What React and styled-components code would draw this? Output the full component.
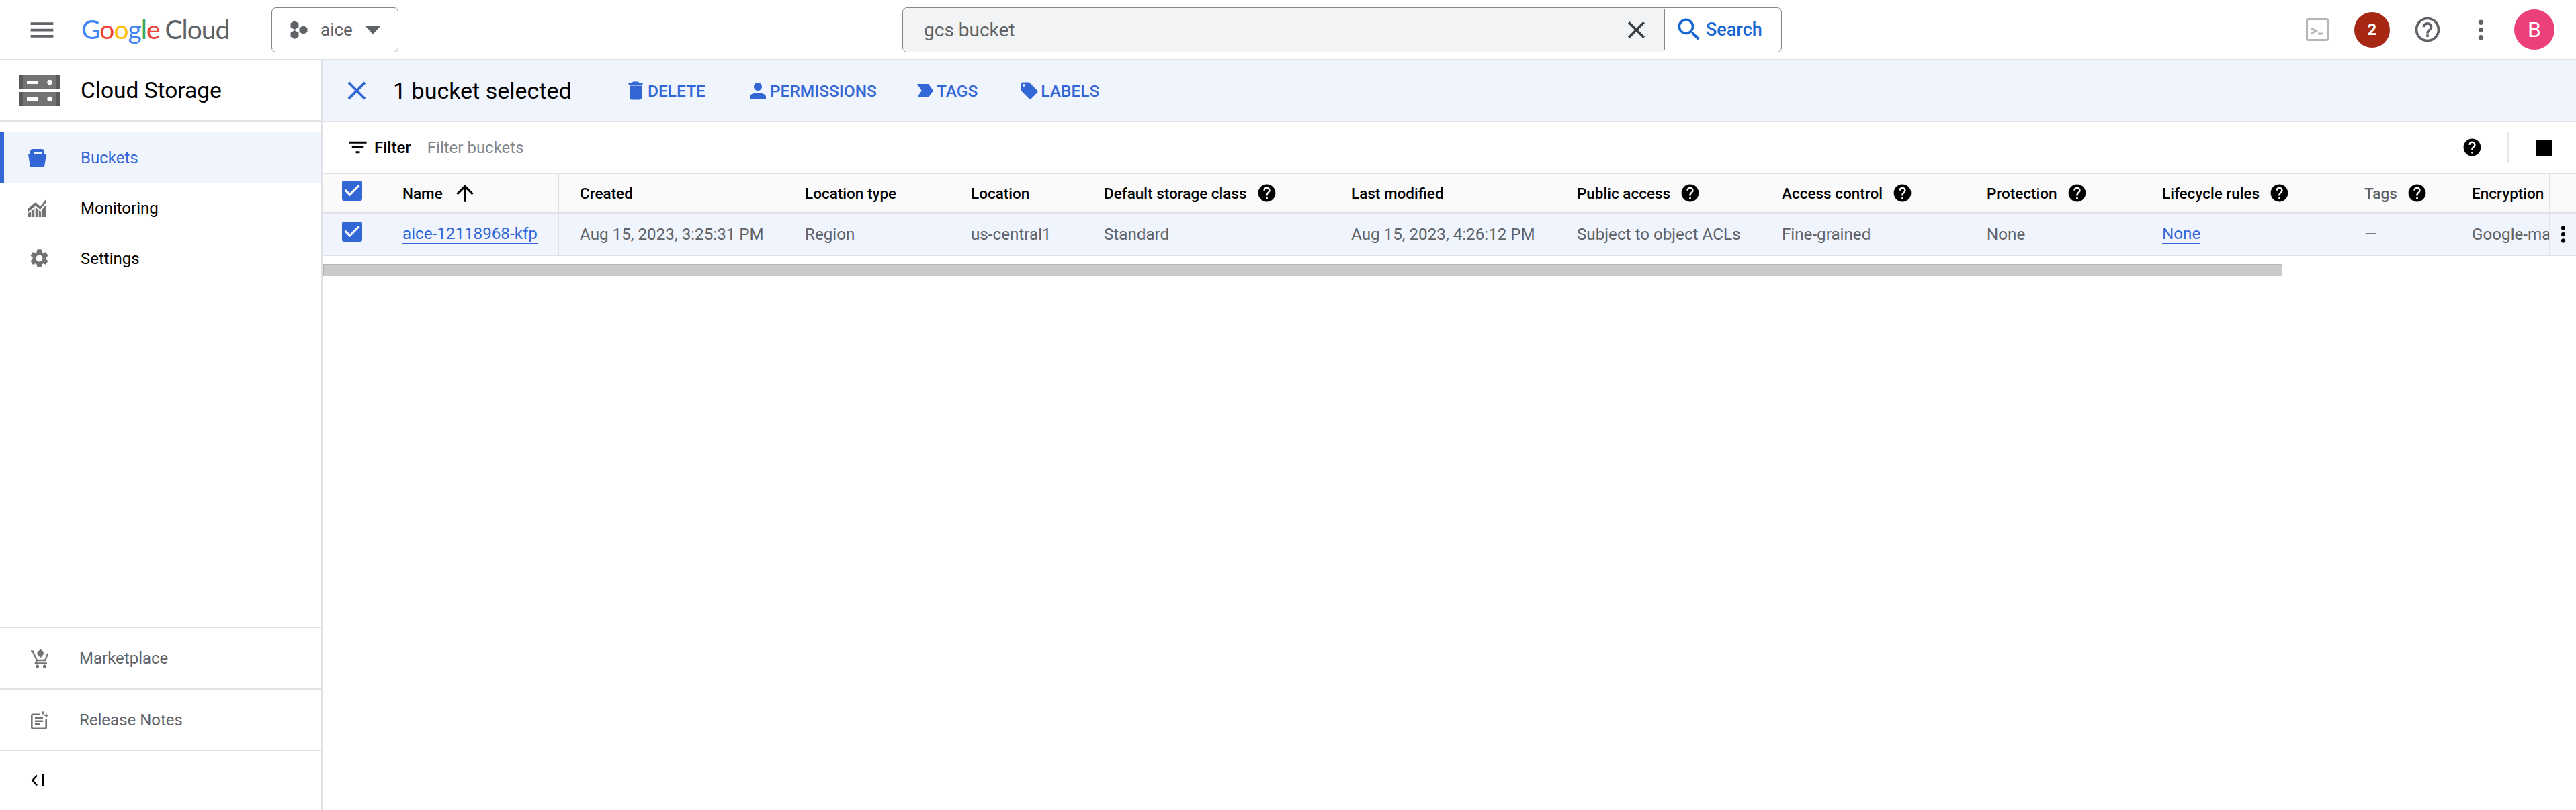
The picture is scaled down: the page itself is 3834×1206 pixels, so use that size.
import React from 'react'
import styled, { createGlobalStyle } from 'styled-components'
import {
  MdMenu,
  MdClose,
  MdDelete,
  MdPerson,
  MdLabelImportant,
  MdLocalOffer,
  MdFilterList,
  MdHelp,
  MdHelpOutline,
  MdMoreVert,
  MdArrowUpward,
  MdSearch,
  MdSettings,
  MdCheckBox,
} from 'react-icons/md'

const BLUE = '#3367d6'
const GREY = '#5f6368'
const ICON = '#737373'
const LINE = '#dfe1e5'

const GlobalStyle = createGlobalStyle`
  html, body { margin: 0; padding: 0; background: #fff; }
  body { font-family: Roboto, "Liberation Sans", sans-serif; color: #000; }
  * { box-sizing: border-box; }
`

const Page = styled.div`
  width: 3834px;
  height: 1206px;
  display: flex;
  flex-direction: column;
  overflow: hidden;
`

const Header = styled.header`
  height: 90px;
  flex: none;
  display: flex;
  align-items: center;
  border-bottom: 2px solid ${LINE};
  padding-left: 40px;
  color: ${GREY};
`
const Logo = styled.div`
  width: 283px;
  margin-left: 36px;
  font-family: Lato, sans-serif;
  font-size: 39px;
  line-height: 1;
  letter-spacing: -1px;
  white-space: nowrap;
  margin-top: -2px;
`
const LogoLetter = styled.span`
  color: ${p => p.$color};
`
const LogoWord = styled.span`
  color: ${GREY};
  margin-left: 8px;
`
const ProjectButton = styled.div`
  width: 189px;
  height: 67px;
  border: 1px solid #80868b;
  border-radius: 7px;
  display: flex;
  align-items: center;
  padding-left: 27px;
  font-size: 26px;
  color: ${GREY};
`
const ProjectName = styled.span`
  margin-left: 19px;
  width: 66px;
`
const Caret = styled.span`
  width: 0;
  height: 0;
  border-left: 12px solid transparent;
  border-right: 12px solid transparent;
  border-top: 13px solid ${GREY};
`
const SearchBox = styled.div`
  width: 1309px;
  height: 67px;
  margin-left: 750px;
  border: 1px solid #80868b;
  border-radius: 7px;
  display: flex;
  overflow: hidden;
`
const SearchInput = styled.div`
  flex: 1;
  background: #f1f3f4;
  display: flex;
  align-items: center;
  justify-content: space-between;
  padding: 0 20px 0 31px;
  font-size: 28px;
  color: ${GREY};
  svg { color: #3c4043; }
`
const SearchButton = styled.div`
  width: 174px;
  border-left: 1px solid #80868b;
  margin: 2px 0;
  display: flex;
  align-items: center;
  padding-left: 14px;
  gap: 3px;
  font-size: 27px;
  font-weight: 500;
  color: #1967d2;
`
const TopIcons = styled.div`
  margin-left: auto;
  display: flex;
  align-items: center;
  padding-right: 32px;
`
const Badge = styled.div`
  width: 53px;
  height: 53px;
  margin-left: 38px;
  border-radius: 50%;
  background: #a52714;
  color: #fff;
  font-size: 24px;
  font-weight: 700;
  display: flex;
  align-items: center;
  justify-content: center;
`
const HelpTop = styled(MdHelpOutline)`
  margin-left: 34px;
  color: ${GREY};
`
const DotsTop = styled(MdMoreVert)`
  margin-left: 35px;
  color: ${GREY};
`
const Avatar = styled.div`
  width: 60px;
  height: 60px;
  margin-left: 27px;
  border-radius: 50%;
  background: #ec407a;
  color: #fff;
  font-size: 32px;
  display: flex;
  align-items: center;
  justify-content: center;
`

const Body = styled.div`
  flex: 1;
  display: flex;
  min-height: 0;
`
const Sidebar = styled.nav`
  width: 480px;
  flex: none;
  border-right: 2px solid ${LINE};
  display: flex;
  flex-direction: column;
`
const ProductRow = styled.div`
  height: 92px;
  flex: none;
  display: flex;
  align-items: center;
  gap: 31px;
  padding-left: 29px;
  font-size: 33.5px;
  color: #000;
  border-bottom: 3px solid ${LINE};
`
const NavList = styled.div`
  padding-top: 15px;
  flex: 1;
`
const NavItem = styled.div`
  height: 75px;
  display: flex;
  align-items: center;
  font-size: 24px;
  padding-left: ${p => (p.$active ? '40px' : '46px')};
  color: ${p => (p.$active ? BLUE : '#000')};
  background: ${p => (p.$active ? '#f0f4fd' : 'transparent')};
  border-left: ${p => (p.$active ? `6px solid ${BLUE}` : 'none')};
  svg { color: ${p => (p.$active ? BLUE : ICON)}; }
`
const NavIconBox = styled.span`
  width: 78px;
  flex: none;
  display: flex;
  margin-left: -4px;
`
const FootItem = styled.div`
  height: ${p => p.$h}px;
  flex: none;
  display: flex;
  align-items: center;
  padding-left: 46px;
  font-size: 24px;
  color: ${GREY};
  border-top: 2px solid ${LINE};
`
const FootIconBox = styled.span`
  width: 72px;
  flex: none;
  display: flex;
`

const Main = styled.main`
  flex: 1;
  min-width: 0;
  display: flex;
  flex-direction: column;
`
const ActionBar = styled.div`
  height: 92px;
  flex: none;
  background: #f0f4fd;
  border-bottom: 2px solid ${LINE};
  display: flex;
  align-items: center;
  padding-left: 28px;
  color: ${BLUE};
`
const Selected = styled.div`
  width: 343px;
  margin-left: 31px;
  font-size: 34px;
  color: #000;
`
const ActionButton = styled.div`
  display: flex;
  align-items: center;
  gap: ${p => p.$gap}px;
  margin-right: ${p => p.$right}px;
  font-size: 24.5px;
  font-weight: 500;
`
const FilterRow = styled.div`
  height: 75px;
  flex: none;
  display: flex;
  align-items: center;
  padding-left: 35px;
  font-size: 24px;
`
const FilterLabel = styled.span`
  font-weight: 500;
  margin-left: 7px;
`
const FilterHint = styled.span`
  margin-left: 24px;
  color: #80868b;
`
const FilterTools = styled.div`
  margin-left: auto;
  display: flex;
  align-items: center;
  height: 45px;
  padding-right: 36px;
`
const ToolDivider = styled.span`
  width: 2px;
  height: 45px;
  background: #e6e8ea;
  margin: 0 41px 0 37px;
`

const Table = styled.div`
  position: relative;
  display: grid;
  grid-template-columns: 352px 335px 247px 198px 368px 336px 305px 305px 261px 301px 160px 186px;
  width: 3354px;
  overflow: hidden;
  flex: none;
`
const HeadCell = styled.div`
  height: 61px;
  display: flex;
  align-items: center;
  gap: 14px;
  padding-left: 31px;
  white-space: nowrap;
  overflow: hidden;
  font-size: 22.5px;
  font-weight: 500;
  background: #fafafa;
  border-top: 2px solid ${LINE};
  border-bottom: 2px solid ${LINE};
  color: ${p => (p.$muted ? GREY : '#000')};
  ${p => p.$first && `padding-left: 0; border-right: 2px solid ${LINE};`}
`
const RowCell = styled.div`
  height: 63px;
  display: flex;
  align-items: center;
  padding-left: 31px;
  white-space: nowrap;
  overflow: hidden;
  font-size: 24.2px;
  color: ${GREY};
  background: #f0f4fd;
  border-bottom: 2px solid ${LINE};
  ${p => p.$first && `padding-left: 0; border-right: 2px solid ${LINE};`}
`
const CheckBox = styled(MdCheckBox)`
  flex: none;
  margin: -7px 0 0 24px;
  color: ${BLUE};
`
const NameText = styled.span`
  margin-left: 41px;
`
const TableLink = styled.span`
  color: ${BLUE};
  border-bottom: 2px solid ${BLUE};
  line-height: 27px;
  margin-top: 2px;
`
const RowLink = styled(TableLink)`
  margin-left: 55px;
`
const Sticky = styled.div`
  position: absolute;
  top: 0;
  right: 0;
  width: 40px;
  height: 124px;
  background: #fff;
  border-left: 2px solid ${LINE};
`
const StickyHead = styled.div`
  height: 61px;
  background: #fafafa;
  border-top: 2px solid ${LINE};
  border-bottom: 2px solid ${LINE};
`
const StickyRow = styled.div`
  height: 63px;
  background: #f0f4fd;
  border-bottom: 2px solid ${LINE};
  display: flex;
  align-items: center;
  justify-content: center;
`
const ScrollBar = styled.div`
  width: 2917px;
  height: 18px;
  margin-top: 12px;
  background: #cacaca;
  border-top: 2px solid #b5b5b5;
  border-left: 2px solid #b5b5b5;
  flex: none;
`

const StorageIcon = () => (
  <svg width="60" height="46" viewBox="0 0 60 46">
    <path fill={ICON} d="M0 0h60v21H0zM0 25h60v21H0z" />
    <path fill="#5a5a5a" d="M0 0h5v21H0zM0 25h5v21H0zM54 0h6v21h-6zM54 25h6v21h-6z" />
    <path fill="#fff" d="M11 8h17v5H11zM11 33h17v5H11z" />
    <circle cx="45" cy="10.500" r="3.700" fill="#fff" />
    <circle cx="45" cy="35.500" r="3.700" fill="#fff" />
  </svg>
)
const BucketIcon = () => (
  <svg width="27" height="26" viewBox="0 0 27 26" fill="currentColor">
    <path fillRule="evenodd" d="M3 8V4a4 4 0 0 1 4-4h13a4 4 0 0 1 4 4v4h3l-3 18H3L0 8zM8 4v4h12V4z" />
  </svg>
)
const MonitorIcon = () => (
  <svg width="27" height="27" viewBox="0 0 27 27">
    <path fill={ICON} d="M0 14L11 5l7 6 9-11v27H0z" />
    <path fill="none" stroke="#fff" strokeWidth="2" d="M0 20.500l11-9 7 6 9-11" />
    <path fill="none" stroke="#fff" strokeWidth="1.500" d="M5 18v9M10 14v13M15 15v12M20 17v10" />
  </svg>
)
const MarketIcon = () => (
  <svg width="26" height="29" viewBox="0 0 26 29">
    <path fill={ICON} d="M14.300 0l5.500 6.700-5.500 6.800-5.500-6.800z" />
    <path fill="none" stroke={ICON} strokeWidth="2.300" d="M0 3.500h2.500L9 17h12l4.300-10M9 17l-2.300 4.500H24" />
    <circle cx="9.500" cy="26" r="2.600" fill={ICON} />
    <circle cx="20.500" cy="26" r="2.600" fill={ICON} />
  </svg>
)
const NotesIcon = () => (
  <svg width="26" height="28" viewBox="0 0 26 28">
    <path fill="none" stroke={ICON} strokeWidth="2.600" d="M14 5.800H3a1.700 1.700 0 0 0-1.700 1.700v17.500A1.700 1.700 0 0 0 3 26.700h18a1.700 1.700 0 0 0 1.700-1.700V13" />
    <path fill={ICON} d="M6 10h12v2.500H6zM6 14.500h12V17H6zM6 19h8v2.500H6z" />
    <path fill={ICON} d="M18 0l1 2.500L21.500 3.500 19 4.500 18 7l-1-2.500L14.500 3.500 17 2.500zM23 4l1 2.500L26.500 7.500 24 8.500 23 11l-1-2.500-2.500-1 2.500-1z" />
  </svg>
)
const CollapseIcon = () => (
  <svg width="20" height="18" viewBox="0 0 20 18" fill="none" stroke="#000" strokeWidth="2.500">
    <path d="M9 1.500L2.500 9 9 16.500M18 0v18" />
  </svg>
)
const HexIcon = () => (
  <svg width="26" height="27" viewBox="0 0 26 27" fill={GREY}>
    <path d="M6.500 0l6 3.500v6l-6 3.500-6-3.500v-6zM6.500 14l6 3.500v6l-6 3.500-6-3.500v-6zM19.500 7l6 3.500v6l-6 3.500-6-3.500v-6z" />
  </svg>
)
const TerminalIcon = () => (
  <svg width="34" height="34" viewBox="0 0 34 34" fill="none" stroke="#b5b5b5">
    <rect x="1.500" y="1.500" width="31" height="31" rx="2" strokeWidth="3" />
    <path d="M8 15l7 4-7 4" strokeWidth="3" />
    <path d="M18 23h7" strokeWidth="3" />
  </svg>
)
const ColumnsIcon = () => (
  <svg width="23" height="24" viewBox="0 0 23 24" fill="#000">
    <path d="M0 0h5v24H0zM6 0h5v24H6zM12 0h5v24h-5zM18 0h5v24h-5z" />
  </svg>
)

const LOGO = [
  ['G', '#4285f4'],
  ['o', '#ea4335'],
  ['o', '#fbbc05'],
  ['g', '#4285f4'],
  ['l', '#34a853'],
  ['e', '#ea4335'],
]

const COLUMNS = [
  { label: 'Created', value: 'Aug 15, 2023, 3:25:31 PM' },
  { label: 'Location type', value: 'Region' },
  { label: 'Location', value: 'us-central1' },
  { label: 'Default storage class', value: 'Standard', help: true },
  { label: 'Last modified', value: 'Aug 15, 2023, 4:26:12 PM' },
  { label: 'Public access', value: 'Subject to object ACLs', help: true },
  { label: 'Access control', value: 'Fine-grained', help: true },
  { label: 'Protection', value: 'None', help: true },
  { label: 'Lifecycle rules', value: 'None', help: true, link: true },
  { label: 'Tags', value: '—', help: true, muted: true },
  { label: 'Encryption', value: 'Google-managed' },
]

export default function App() {
  return (
    <Page>
      <GlobalStyle />
      <Header>
        <MdMenu size={45} />
        <Logo>
          {LOGO.map(([letter, color], i) => (
            <LogoLetter key={i} $color={color}>
              {letter}
            </LogoLetter>
          ))}
          <LogoWord>Cloud</LogoWord>
        </Logo>
        <ProjectButton>
          <HexIcon />
          <ProjectName>aice</ProjectName>
          <Caret />
        </ProjectButton>
        <SearchBox>
          <SearchInput>
            gcs bucket
            <MdClose size={43} />
          </SearchInput>
          <SearchButton>
            <MdSearch size={44} />
            Search
          </SearchButton>
        </SearchBox>
        <TopIcons>
          <TerminalIcon />
          <Badge>2</Badge>
          <HelpTop size={44} />
          <DotsTop size={45} />
          <Avatar>B</Avatar>
        </TopIcons>
      </Header>
      <Body>
        <Sidebar>
          <ProductRow>
            <StorageIcon />
            Cloud Storage
          </ProductRow>
          <NavList>
            <NavItem $active>
              <NavIconBox>
                <BucketIcon />
              </NavIconBox>
              Buckets
            </NavItem>
            <NavItem>
              <NavIconBox>
                <MonitorIcon />
              </NavIconBox>
              Monitoring
            </NavItem>
            <NavItem>
              <NavIconBox>
                <MdSettings size={33} />
              </NavIconBox>
              Settings
            </NavItem>
          </NavList>
          <FootItem $h={92}>
            <FootIconBox>
              <MarketIcon />
            </FootIconBox>
            Marketplace
          </FootItem>
          <FootItem $h={91}>
            <FootIconBox>
              <NotesIcon />
            </FootIconBox>
            Release Notes
          </FootItem>
          <FootItem $h={90}>
            <CollapseIcon />
          </FootItem>
        </Sidebar>
        <Main>
          <ActionBar>
            <MdClose size={46} color={BLUE} />
            <Selected>1 bucket selected</Selected>
            <ActionButton $right={60} $gap={0}>
              <MdDelete size={36} />
              DELETE
            </ActionButton>
            <ActionButton $right={55} $gap={-2}>
              <MdPerson size={36} />
              PERMISSIONS
            </ActionButton>
            <ActionButton $right={62} $gap={0}>
              <MdLabelImportant size={34} />
              TAGS
            </ActionButton>
            <ActionButton $right={0} $gap={2}>
              <MdLocalOffer size={30} />
              LABELS
            </ActionButton>
          </ActionBar>
          <FilterRow>
            <MdFilterList size={35} />
            <FilterLabel>Filter</FilterLabel>
            <FilterHint>Filter buckets</FilterHint>
            <FilterTools>
              <MdHelp size={31} />
              <ToolDivider />
              <ColumnsIcon />
            </FilterTools>
          </FilterRow>
          <Table>
            <HeadCell $first>
              <CheckBox size={40} />
              <NameText>Name</NameText>
              <MdArrowUpward size={38} />
            </HeadCell>
            {COLUMNS.map(col => (
              <HeadCell key={col.label} $muted={col.muted}>
                {col.label}
                {col.help && <MdHelp size={31} color="#000" />}
              </HeadCell>
            ))}
            <RowCell $first>
              <CheckBox size={40} />
              <RowLink>aice-12118968-kfp</RowLink>
            </RowCell>
            {COLUMNS.map(col => (
              <RowCell key={col.label}>
                {col.link ? <TableLink>{col.value}</TableLink> : col.value}
              </RowCell>
            ))}
            <Sticky>
              <StickyHead />
              <StickyRow>
                <MdMoreVert size={46} color="#000" />
              </StickyRow>
            </Sticky>
          </Table>
          <ScrollBar />
        </Main>
      </Body>
    </Page>
  )
}
